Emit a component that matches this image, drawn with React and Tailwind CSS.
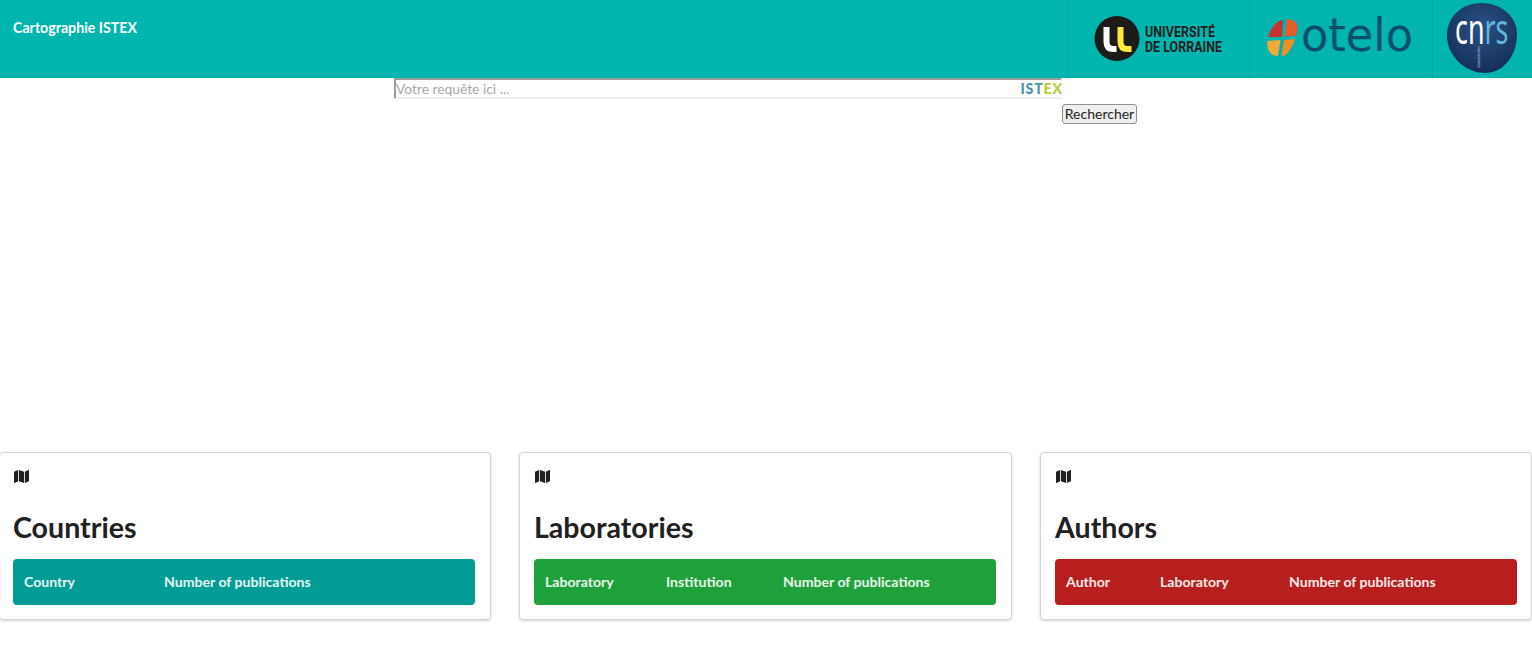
import React from 'react';
import { FaMap } from 'react-icons/fa';

const panels = [
  {
    title: 'Countries',
    color: 'bg-[#009c95]',
    padding: 'pl-[13px]',
    columns: [
      { label: 'Country', width: 'w-[140px]' },
      { label: 'Number of publications', width: '' },
    ],
  },
  {
    title: 'Laboratories',
    color: 'bg-[#1ea03a]',
    padding: 'pl-[14px]',
    columns: [
      { label: 'Laboratory', width: 'w-[121px]' },
      { label: 'Institution', width: 'w-[117px]' },
      { label: 'Number of publications', width: '' },
    ],
  },
  {
    title: 'Authors',
    color: 'bg-[#b71f1f]',
    padding: 'pl-[14px]',
    columns: [
      { label: 'Author', width: 'w-[94px]' },
      { label: 'Laboratory', width: 'w-[129px]' },
      { label: 'Number of publications', width: '' },
    ],
  },
];

const LorraineLogo = () => (
  <svg width="181" height="78" viewBox="0 0 181 78">
    <circle cx="49" cy="38.5" r="22.5" fill="#1d1a1a" />
    <path d="M38.5 27v15q0 7 7 7h3" fill="none" stroke="#ffffff" strokeWidth="6" />
    <path d="M52.5 27v15q0 7 7 7h4" fill="none" stroke="#ffe93c" strokeWidth="6" />
    <text x="77" y="37" fontFamily="Roboto" fontWeight="700" fontSize="14" fill="#231f20" textLength="70" lengthAdjust="spacingAndGlyphs">UNIVERSITÉ</text>
    <text x="77" y="52" fontFamily="Roboto" fontWeight="700" fontSize="14" fill="#231f20" textLength="77" lengthAdjust="spacingAndGlyphs">DE LORRAINE</text>
  </svg>
);

const OteloLogo = () => (
  <svg width="182" height="78" viewBox="0 0 182 78">
    <path d="M33 20C26 21 21 28 18 37L32 37Z" fill="#c9302f" />
    <path d="M37 19C42 19 48 22 47.5 28C47.5 31 47 33 46 35.5L34.5 36.5Z" fill="#e85c2c" />
    <path d="M17.5 41L30.5 40L28 56C21 56 16 50 17.5 41Z" fill="#f5a73b" />
    <path d="M34 40L45 39C42 48 38 55 31.5 56.5Z" fill="#f28d24" />
    <text x="51" y="51" fontFamily="DejaVu Sans" fontSize="46" fill="#0b4f6c" textLength="112" lengthAdjust="spacingAndGlyphs">otelo</text>
  </svg>
);

const CnrsLogo = () => (
  <svg width="99" height="78" viewBox="0 0 99 78">
    <defs>
      <radialGradient id="cnrsBlob" cx="50%" cy="35%" r="70%">
        <stop offset="0%" stopColor="#2a5185" />
        <stop offset="100%" stopColor="#142c56" />
      </radialGradient>
    </defs>
    <path d="M14 34C15 15 30 3 49 3c17 0 35 12 35 31 0 22-14 39-32 39C32 73 13 55 14 34z" fill="url(#cnrsBlob)" />
    <text transform="translate(22 44) scale(0.64 1)" fontFamily="Noto Sans" fontSize="42">
      <tspan fill="#ffffff">cn</tspan>
      <tspan fill="#5fb7dd">rs</tspan>
    </text>
    <text transform="translate(47 68) rotate(-90)" fontFamily="Noto Sans" fontSize="3.5" fill="#8fa6c4" textLength="22">dépasser les frontières</text>
  </svg>
);

const App = () => {
  return (
    <div className="min-h-[668px] overflow-hidden bg-white font-['Lato',sans-serif] text-[14px] text-[#212121]">
      <header className="flex h-[78px] justify-between bg-[#00b5ad]">
        <div className="pl-[13px] pt-[19px] text-[14.2px] leading-[18px] font-bold text-white">Cartographie ISTEX</div>
        <div className="flex">
          <div className="border-l border-[#00a39c]"><LorraineLogo /></div>
          <div className="border-l border-[#00a39c]"><OteloLogo /></div>
          <div className="border-l border-[#00a39c]"><CnrsLogo /></div>
        </div>
      </header>

      <form className="flex pl-[394px]">
        <div className="relative h-[21px] w-[668px]">
          <input
            type="text"
            placeholder="Votre requête ici ..."
            className="h-[21px] w-full border-2 border-t-[#9a9a9a] border-r-[#eeeeee] border-b-[#eeeeee] border-l-[#9a9a9a] px-0 text-[13.8px] leading-[16px] outline-none placeholder:text-[#a9a9a9]"
          />
          <span className="absolute top-[3px] right-[-1px] bg-white text-[14.2px] leading-[16px] font-black tracking-[0.8px]">
            <span className="text-[#4f93a8]">IST</span>
            <span className="text-[#b9d03c]">EX</span>
          </span>
        </div>
        <button type="button" className="mt-[26px] h-[20px] w-[75px] rounded-[3px] border border-[#8f8f8f] bg-[#efefef] text-[14px] leading-[16px] text-[#222222]">
          Rechercher
        </button>
      </form>

      <main className="mt-[328px] -ml-px grid grid-cols-[492px_493px_492px] gap-[28px]">
        {panels.map((panel) => (
          <section key={panel.title} className={`h-[168px] rounded-[4px] border border-[#d4d4d5] bg-white pt-[16px] shadow-[0_1px_3px_0_#d4d4d5] ${panel.padding}`}>
            <FaMap preserveAspectRatio="none" className="ml-px h-[15px] w-[15px] text-[#212121]" />
            <h1 className="mt-[25px] text-[28.6px] leading-[36px] font-bold">{panel.title}</h1>
            <table className={`mt-[14px] w-[462px] rounded-[4px] ${panel.color}`}>
              <thead>
                <tr>
                  {panel.columns.map((col) => (
                    <th key={col.label} className={`h-[46px] pl-[11px] text-left text-[14.1px] font-bold text-white/90 ${col.width}`}>
                      {col.label}
                    </th>
                  ))}
                </tr>
              </thead>
            </table>
          </section>
        ))}
      </main>
    </div>
  );
};

export default App;
